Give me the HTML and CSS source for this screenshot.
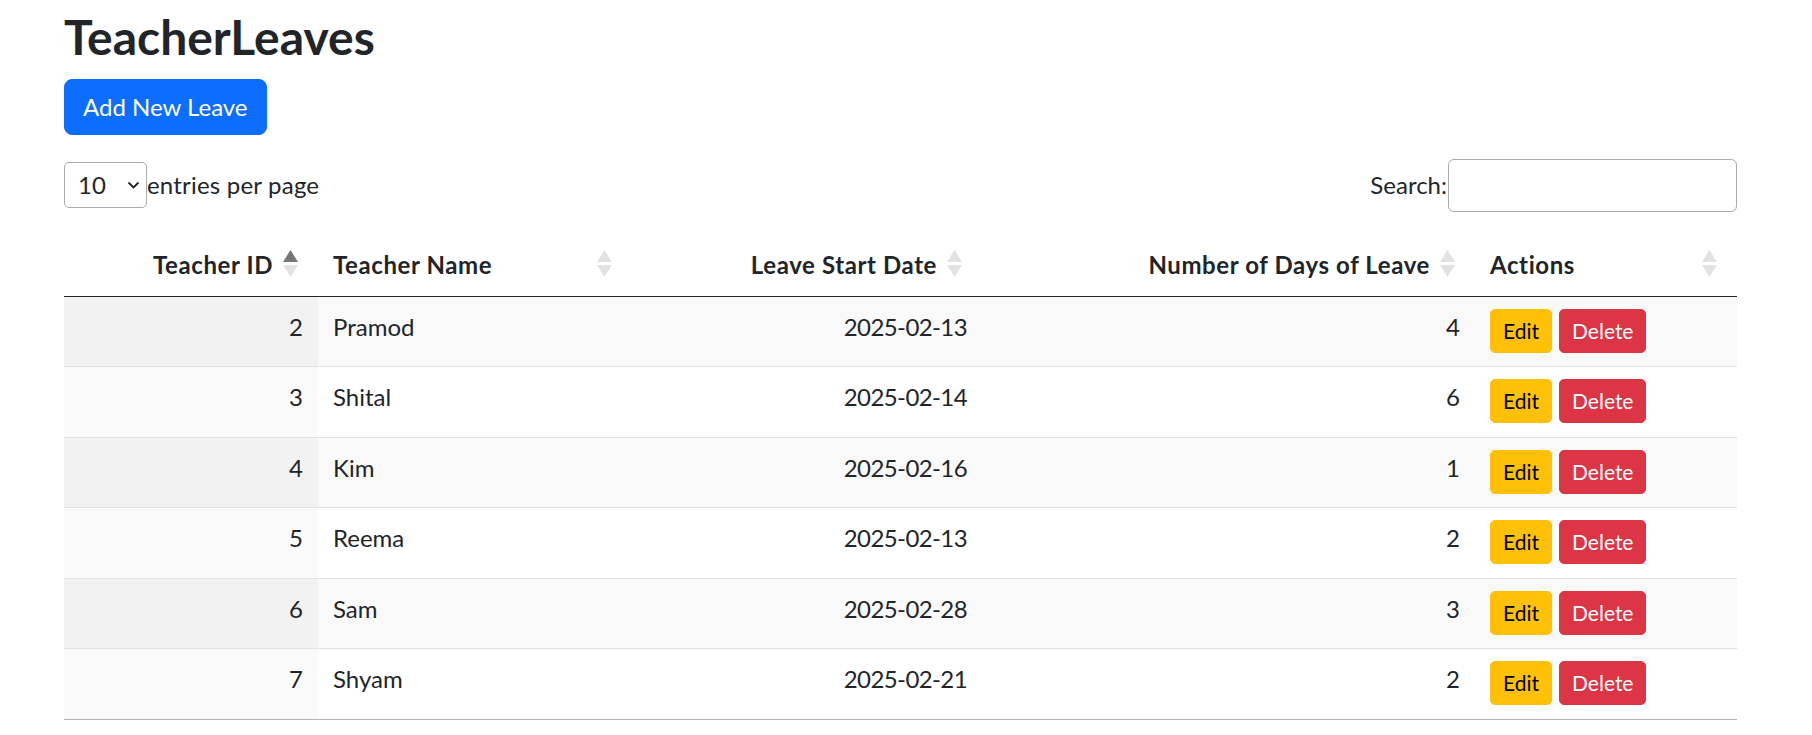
FILE: index.html
```html
<!DOCTYPE html>
<html lang="en">
<head>
<meta charset="utf-8">
<title>TeacherLeaves</title>
<link rel="stylesheet" href="styles.css">
</head>
<body>
<div class="page">
  <h2 class="title">TeacherLeaves</h2>
  <button class="btn btn-add" type="button">Add New Leave</button>

  <div class="dt-top">
    <div class="length">
      <div class="select-wrap">
        <select class="length-select" aria-label="entries per page">
          <option>10</option>
          <option>25</option>
          <option>50</option>
        </select>
        <svg class="chev" width="13" height="8" viewBox="0 0 13 8"><path d="M1.5 1.5 L6.5 6.5 L11.5 1.5" fill="none" stroke="#222" stroke-width="1.8"/></svg>
      </div>
      <span class="length-label">entries per page</span>
    </div>
    <div class="search">
      <label class="search-label" for="s">Search:</label>
      <input class="search-input" id="s" type="search">
    </div>
  </div>

  <table class="dt">
    <colgroup>
      <col class="c1"><col class="c2"><col class="c3"><col class="c4"><col class="c5">
    </colgroup>
    <thead>
      <tr>
        <th class="num">Teacher ID<svg class="sort" width="15" height="27" viewBox="0 0 15 27"><path d="M7.5 0 L15 12 L0 12 Z" fill="#767676"/><path d="M0 15 L15 15 L7.5 27 Z" fill="#e2e2e2"/></svg></th>
        <th>Teacher Name<svg class="sort" width="15" height="27" viewBox="0 0 15 27"><path d="M7.5 0 L15 12 L0 12 Z" fill="#e2e2e2"/><path d="M0 15 L15 15 L7.5 27 Z" fill="#e2e2e2"/></svg></th>
        <th class="num">Leave Start Date<svg class="sort" width="15" height="27" viewBox="0 0 15 27"><path d="M7.5 0 L15 12 L0 12 Z" fill="#e2e2e2"/><path d="M0 15 L15 15 L7.5 27 Z" fill="#e2e2e2"/></svg></th>
        <th class="num">Number of Days of Leave<svg class="sort" width="15" height="27" viewBox="0 0 15 27"><path d="M7.5 0 L15 12 L0 12 Z" fill="#e2e2e2"/><path d="M0 15 L15 15 L7.5 27 Z" fill="#e2e2e2"/></svg></th>
        <th>Actions<svg class="sort" width="15" height="27" viewBox="0 0 15 27"><path d="M7.5 0 L15 12 L0 12 Z" fill="#e2e2e2"/><path d="M0 15 L15 15 L7.5 27 Z" fill="#e2e2e2"/></svg></th>
      </tr>
    </thead>
    <tbody>
      <tr>
        <td class="num sorted">2</td><td>Pramod</td><td class="num date">2025-02-13</td><td class="num">4</td>
        <td><div class="actions"><button class="btn btn-sm btn-edit" type="button">Edit</button><button class="btn btn-sm btn-del" type="button">Delete</button></div></td>
      </tr>
      <tr>
        <td class="num sorted">3</td><td>Shital</td><td class="num date">2025-02-14</td><td class="num">6</td>
        <td><div class="actions"><button class="btn btn-sm btn-edit" type="button">Edit</button><button class="btn btn-sm btn-del" type="button">Delete</button></div></td>
      </tr>
      <tr>
        <td class="num sorted">4</td><td>Kim</td><td class="num date">2025-02-16</td><td class="num">1</td>
        <td><div class="actions"><button class="btn btn-sm btn-edit" type="button">Edit</button><button class="btn btn-sm btn-del" type="button">Delete</button></div></td>
      </tr>
      <tr>
        <td class="num sorted">5</td><td>Reema</td><td class="num date">2025-02-13</td><td class="num">2</td>
        <td><div class="actions"><button class="btn btn-sm btn-edit" type="button">Edit</button><button class="btn btn-sm btn-del" type="button">Delete</button></div></td>
      </tr>
      <tr>
        <td class="num sorted">6</td><td>Sam</td><td class="num date">2025-02-28</td><td class="num">3</td>
        <td><div class="actions"><button class="btn btn-sm btn-edit" type="button">Edit</button><button class="btn btn-sm btn-del" type="button">Delete</button></div></td>
      </tr>
      <tr>
        <td class="num sorted">7</td><td>Shyam</td><td class="num date">2025-02-21</td><td class="num">2</td>
        <td><div class="actions"><button class="btn btn-sm btn-edit" type="button">Edit</button><button class="btn btn-sm btn-del" type="button">Delete</button></div></td>
      </tr>
    </tbody>
  </table>
</div>
</body>
</html>
```

FILE: styles.css
```css
* { box-sizing: border-box; }

body {
  margin: 0;
  font-family: Lato, "Noto Sans", sans-serif;
  font-size: 24px;
  line-height: 1.5;
  color: #212529;
  background: #fff;
}

.page {
  padding: 8px 75px 0 64px;
}

.title {
  font-size: 48px;
  font-weight: 700;
  line-height: 57.6px;
  margin: 0 0 13px;
}

.btn {
  display: inline-block;
  border: 1px solid transparent;
  font-family: inherit;
  cursor: pointer;
  text-align: center;
}

.btn-add {
  background: #0d6efd;
  border-color: #0d6efd;
  color: #fff;
  font-size: 24px;
  line-height: 36px;
  padding: 9px 18px;
  border-radius: 8px;
}

.dt-top {
  display: flex;
  justify-content: space-between;
  align-items: center;
  margin-top: 24px;
  height: 53px;
}

.length {
  display: flex;
  align-items: center;
}

.length-label {
  letter-spacing: 0.2px;
}

.select-wrap {
  position: relative;
  width: 83px;
  height: 46px;
}

.length-select {
  appearance: none;
  -webkit-appearance: none;
  width: 100%;
  height: 100%;
  border: 1px solid #aaa;
  border-radius: 5px;
  padding: 0 0 0 13px;
  font: inherit;
  color: #212529;
  background: #fff;
}

.chev {
  position: absolute;
  right: 7px;
  top: 19px;
  pointer-events: none;
}

.search {
  display: flex;
  align-items: center;
  gap: 1px;
}

.search-input {
  width: 289px;
  height: 53px;
  border: 1px solid #aaa;
  border-radius: 6px;
  font: inherit;
  padding: 0 12px;
}

.dt {
  width: 100%;
  margin-top: 22px;
  border-collapse: collapse;
  table-layout: fixed;
}

.c1 { width: 254px; }
.c2 { width: 314px; }
.c3 { width: 350px; }
.c4 { width: 493px; }
.c5 { width: 262px; }

.dt th {
  position: relative;
  font-weight: 700;
  text-align: left;
  padding: 13px 45px 13px 15px;
  border-bottom: 1px solid #212529;
  white-space: nowrap;
  letter-spacing: 0.6px;
}

.dt th.num,
.dt td.num {
  text-align: right;
}

.sort {
  position: absolute;
  right: 20px;
  top: 16px;
}

.dt td {
  padding: 12px 15px 13.5px;
  border-bottom: 1px solid #dee2e6;
  vertical-align: top;
}

.dt td.date {
  letter-spacing: -0.6px;
}

.dt tbody tr:nth-child(odd) td { background: #f9f9f9; }
.dt tbody tr:nth-child(odd) td.sorted { background: #f2f2f2; }
.dt tbody tr:nth-child(even) td.sorted { background: #fafafa; }
.dt tbody tr:last-child td { border-bottom-color: #b4b4b4; }

.actions {
  display: flex;
  gap: 7px;
}

.btn-sm {
  font-size: 21px;
  line-height: 30px;
  padding: 6px 12px;
  border-radius: 5px;
}

.btn-edit {
  background: #ffc107;
  border-color: #ffc107;
  color: #000;
}

.btn-del {
  background: #dc3545;
  border-color: #dc3545;
  color: #fff;
}
```
